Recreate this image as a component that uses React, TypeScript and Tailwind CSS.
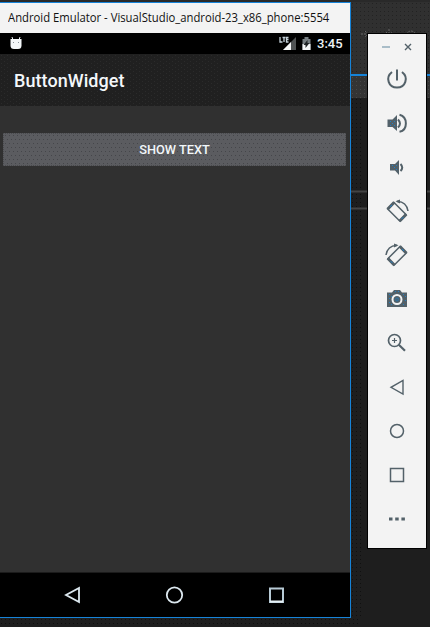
import React from "react";

type GlyphProps = { children: React.ReactNode };

function ToolButton({ children }: GlyphProps) {
  return (
    <button className="flex h-11 w-full shrink-0 items-center justify-center">
      <svg width="24" height="24" viewBox="0 0 24 24" fill="none" stroke="#536169" strokeWidth="1.5">
        {children}
      </svg>
    </button>
  );
}

function Speaker({ loud }: { loud: boolean }) {
  return (
    <>
      <path d={loud ? "M2.5 8.5h5L12 4v16l-4.500-4H2.500z" : "M5 9h5L14 5v15l-4-4.500H5z"} fill="#52616a" stroke="none" />
      <path
        d={loud ? "M5 10.500h1M7 12.500h1M9 10.500h1M5 14.500h1M9 14.500h1" : "M7 10.500h1M9 12.500h1M11 10.500h1M11 14.500h1"}
        stroke="#2580c3"
        strokeWidth="1"
      />
      <path d={loud ? "M13 8.500q4 4 0 8" : "M15.500 9q3.500 3.500 0 7"} strokeWidth="2" />
      {loud && <path d="M14.500 3.800C23 6 23 19 14.500 20.800" strokeWidth="2" />}
    </>
  );
}

function Rotate() {
  return (
    <>
      <path d="M9 3.500 21 15.500 14.700 22 2.700 10z" strokeWidth="1.500" />
      <path d="M2.500 10.300 9.300 3.300M14.500 22.300l6.800-7" strokeWidth="3" />
      <path d="M5 8l2-2M16.500 20l2-2" stroke="#2580c3" strokeWidth="1" />
      <path d="M12 2.500c6-.500 10.500 4 11 9.500" strokeWidth="1.500" />
      <path d="M10.500 2.200 15 .500v4z" fill="#536169" stroke="none" />
    </>
  );
}

function PhoneWindow() {
  return (
    <section className="flex h-[616px] w-[351px] shrink-0 flex-col border-t border-r border-b border-[#1683d8]">
      <header className="flex h-[30px] shrink-0 items-center bg-[#f3f3f3] pl-2">
        <h1 className="origin-left scale-x-[0.94] whitespace-nowrap font-['Open_Sans','Noto_Sans',sans-serif] text-[12px] leading-[16px] text-[#111111]">
          Android Emulator - VisualStudio_android-23_x86_phone:5554
        </h1>
      </header>
      <div className="flex h-[21px] shrink-0 items-center bg-black pr-[7px] pl-[10px]">
        <svg width="13" height="15" viewBox="0 0 13 15" fill="#f4f7f9">
          <path d="M.500 3h11v6.500q0 3.500-3.500 3.500H4Q.500 13 .500 9.500z" />
          <path d="M2 1l1 3M10 1 9 4" stroke="#f4f7f9" />
          <path d="M3 6h1v1H3zM8 6h1v1H8z" fill="#889299" />
        </svg>
        <div className="ml-auto flex items-center">
          <svg width="18" height="17" viewBox="0 0 18 17">
            <path d="M4 15 17 2v13z" fill="#505354" />
            <path d="M4 15 12 7v8z" fill="#f5f7f8" />
            <path d="M1 2v5h2.500M3.500 2.500h3M5 2.500V7M9.500 2.500H7.500V7h2M7.500 4.500h2" stroke="#c3d0d8" strokeWidth="1.300" fill="none" />
          </svg>
          <svg className="ml-[4px]" width="12" height="17" viewBox="0 0 12 17">
            <path d="M1.500 4h2V2h4v2h2v11h-8z" fill="#777f83" />
            <path d="M1.500 9h8v6h-8z" fill="#f5f7f8" />
            <path d="m6.500 5-4 5h2v3l4-5h-2z" fill="#202426" />
          </svg>
          <span className="ml-[4px] w-[26px] whitespace-nowrap font-['Roboto',sans-serif] text-[13px] leading-[20px] font-medium text-[#edf3f7]">3:45</span>
        </div>
      </div>
      <div className="flex h-[52px] shrink-0 items-center bg-[#202020] bg-[radial-gradient(circle_at_1.5px_1.5px,#2b2b2b_0.7px,transparent_0.8px),radial-gradient(circle_at_4.5px_3.5px,#2b2b2b_0.7px,transparent_0.8px)] bg-[size:6px_4px] pl-[14px]">
        <h2 className="pt-[2px] font-['Roboto',sans-serif] text-[18px] leading-[24px] font-medium tracking-[0.06px] text-[#f3f7fa]">ButtonWidget</h2>
      </div>
      <main className="min-h-0 flex-1 border-b border-[#1b1b1b] bg-[#303030] pt-[27px] pr-[4px] pl-[3px]">
        <button className="flex h-[33px] w-full items-center justify-center border border-dotted border-[#494a4d] bg-[#5b5c60] bg-[radial-gradient(circle_at_1.5px_1.5px,#45464a_0.7px,transparent_0.8px),radial-gradient(circle_at_3.5px_5.5px,#45464a_0.7px,transparent_0.8px)] bg-[size:4px_8px] font-['Roboto',sans-serif] text-[12.8px] leading-[20px] font-medium text-[#f2f7fa]">
          SHOW TEXT
        </button>
      </main>
      <nav className="flex h-[44px] shrink-0 items-center bg-black pl-[62px]">
        <svg width="20" height="20" viewBox="0 0 20 20" fill="none" stroke="#dce8ef" strokeWidth="1.800">
          <path d="M17 3v14L4 10z" />
        </svg>
        <svg className="ml-[82px]" width="20" height="20" viewBox="0 0 20 20" fill="none" stroke="#dce8ef" strokeWidth="1.800">
          <circle cx="10.500" cy="10" r="7.700" />
        </svg>
        <svg className="ml-[82px]" width="20" height="20" viewBox="0 0 20 20" fill="none" stroke="#b7cad5" strokeWidth="2">
          <path d="M4 3.500h13V17H4z" />
          <path d="M4 16.500h13" stroke="#e7f1f6" />
        </svg>
      </nav>
    </section>
  );
}

function EmulatorToolbar() {
  return (
    <aside className="absolute top-[33px] left-[367px] flex h-[516px] w-[60px] flex-col border border-black bg-[#f3f3f3]">
      <div className="flex h-[23px] shrink-0 items-center pt-[3px] pl-[14px]">
        <svg width="9" height="10" viewBox="0 0 9 10">
          <path d="M0 5h8" stroke="#a9bdc8" strokeWidth="2" />
        </svg>
        <svg className="ml-[13px]" width="9" height="10" viewBox="0 0 9 10">
          <path d="m1 2 6 6M7 2 1 8" stroke="#536169" strokeWidth="1.400" />
        </svg>
      </div>
      <ToolButton>
        <path d="M7 5C0 10.500 3.500 20.500 12 20.500s12-10 5-15.500" strokeWidth="2" />
        <path d="M12 2.500v11" strokeWidth="2" />
      </ToolButton>
      <ToolButton><Speaker loud /></ToolButton>
      <ToolButton><Speaker loud={false} /></ToolButton>
      <ToolButton><Rotate /></ToolButton>
      <ToolButton><g transform="matrix(-1 0 0 1 24 0)"><Rotate /></g></ToolButton>
      <ToolButton>
        <path d="M2 5.500h5L9 3h6l2 2.500h5V20H2z" fill="#536169" stroke="none" />
        <path d="M4 7.500h1M6 9.500h1M4 11.500h1M4 15.500h1M6 17.500h1M10 4.500h1M13 4.500h1M18 7.500h1M20 9.500h1M18 17.500h1M20 13.500h1" stroke="#2580c3" strokeWidth="1" />
        <circle cx="12" cy="12.500" r="4.500" stroke="#f3f3f3" strokeWidth="2" />
        <circle cx="12" cy="12.500" r="1.500" stroke="#2875aa" strokeWidth="1" />
      </ToolButton>
      <ToolButton>
        <circle cx="9.500" cy="9.500" r="6" strokeWidth="1.700" />
        <path d="M9.500 7v5M7 9.500h5" strokeWidth="1.200" />
        <path d="m13.800 13.800 6.200 6" strokeWidth="2.200" />
      </ToolButton>
      <ToolButton>
        <path d="M18 5.500v13.500L6 12.300z" strokeWidth="1.400" />
      </ToolButton>
      <ToolButton>
        <circle cx="12" cy="12" r="6.500" strokeWidth="1.500" />
      </ToolButton>
      <ToolButton>
        <path d="M5.500 5.500h13v13h-13z" strokeWidth="1.500" />
      </ToolButton>
      <ToolButton>
        <path d="M4 12h3.500M10.200 12h3.500M16.400 12h3.500" strokeWidth="3" />
      </ToolButton>
    </aside>
  );
}

function EditorBackdrop() {
  return (
    <div className="flex min-w-0 flex-1 flex-col bg-[#1e1e1e]">
      <div className="flex h-[72px] shrink-0 items-start bg-[#303030] bg-[radial-gradient(circle_at_1.5px_1.5px,#222222_0.7px,transparent_0.8px)] bg-[size:4px_4px] pt-[26px]">
        <svg className="ml-[10px]" width="64" height="12" viewBox="0 0 64 12" fill="none" stroke="#666" strokeDasharray="2 1">
          <path d="M0 6h7M4 3l3 3-3 3M28 1v5M25 4l3 3 3-3M45 6q5-6 10 0" />
        </svg>
      </div>
      <div className="h-[2px] shrink-0 bg-[#1683d8]" />
      <div className="h-[22px] shrink-0 bg-[#343434] bg-[radial-gradient(circle_at_1.5px_1.5px,#484848_0.7px,transparent_0.8px)] bg-[size:4px_4px]" />
      <div className="flex min-h-0 flex-1 flex-col">
        <div className="h-[92px] w-[12px] shrink-0 bg-[radial-gradient(circle_at_1.5px_1.5px,#101010_0.7px,transparent_0.8px)] bg-[size:4px_4px]" />
        <div className="h-[3px] shrink-0 border-y border-[#303030] bg-[#444]" />
        <div className="h-[14px] w-[12px] shrink-0 bg-[radial-gradient(circle_at_1.5px_1.5px,#101010_0.7px,transparent_0.8px)] bg-[size:4px_4px]" />
        <div className="h-[3px] shrink-0 border-y border-[#303030] bg-[#444]" />
        <div className="min-h-0 w-[12px] flex-1 bg-[radial-gradient(circle_at_1.5px_1.5px,#101010_0.7px,transparent_0.8px)] bg-[size:4px_4px]" />
      </div>
    </div>
  );
}

export default function App() {
  return (
    <div className="relative flex h-[627px] w-[430px] flex-col overflow-hidden bg-[#1e1e1e]">
      <div className="h-[2px] shrink-0 bg-[#292929]" />
      <div className="flex h-[616px] shrink-0">
        <PhoneWindow />
        <EditorBackdrop />
      </div>
      <div className="h-[9px] w-[358px] bg-[radial-gradient(circle_at_1.5px_1.5px,#101010_0.7px,transparent_0.8px)] bg-[size:4px_4px]" />
      <EmulatorToolbar />
    </div>
  );
}
